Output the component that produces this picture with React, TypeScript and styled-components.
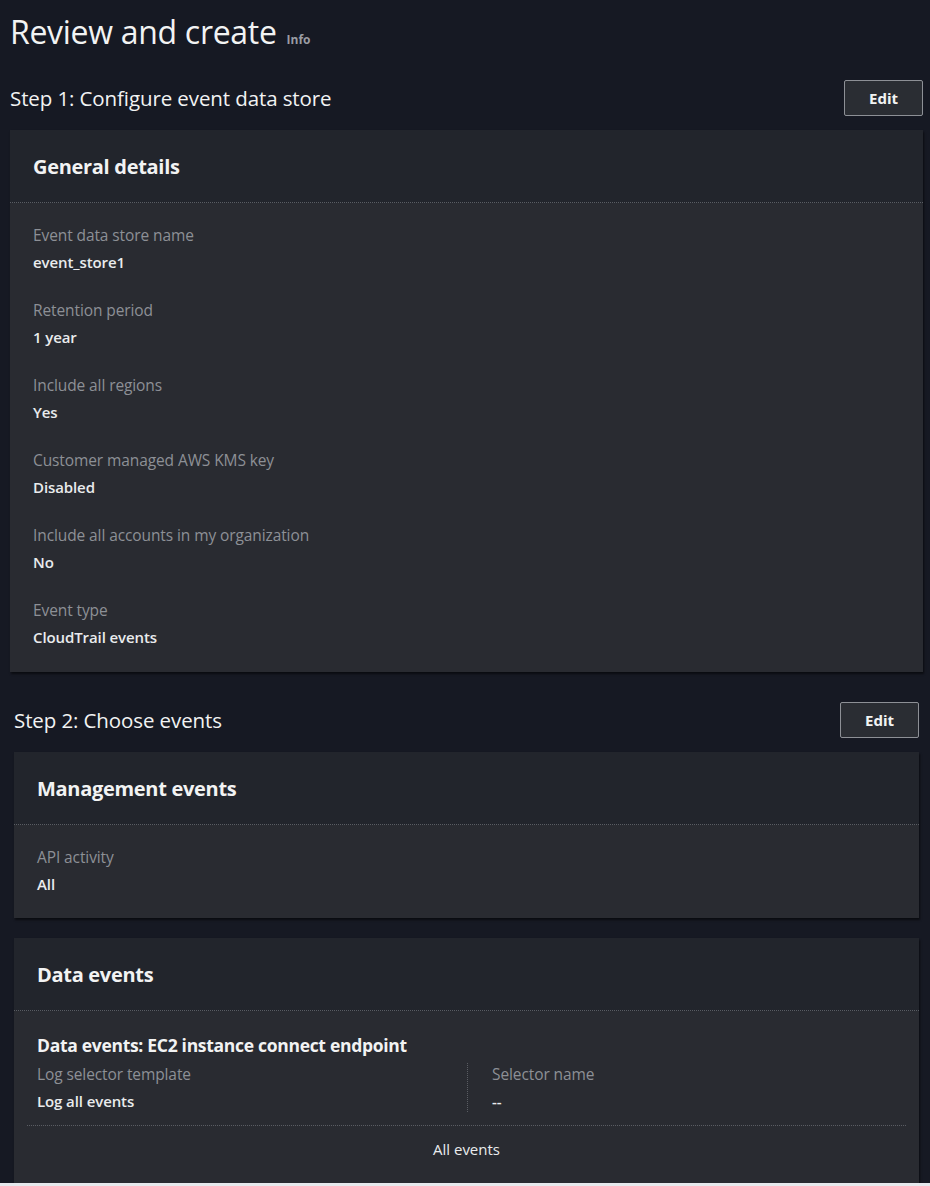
import { createGlobalStyle, styled, css } from "styled-components";

const GlobalStyle = createGlobalStyle`
  html, body {
    margin: 0;
    padding: 0;
    background: #e6e9ed;
  }
  body {
    font-family: "Open Sans", "Noto Sans", Arial, sans-serif;
    -webkit-font-smoothing: antialiased;
  }
`;

type Item = { label: string; value: string };

const generalDetails: Item[] = [
  { label: "Event data store name", value: "event_store1" },
  { label: "Retention period", value: "1 year" },
  { label: "Include all regions", value: "Yes" },
  { label: "Customer managed AWS KMS key", value: "Disabled" },
  { label: "Include all accounts in my organization", value: "No" },
  { label: "Event type", value: "CloudTrail events" },
];

const App = () => {
  return (
    <>
      <GlobalStyle />
      <Page>
        <PageTitle>
          Review and create <InfoLink>Info</InfoLink>
        </PageTitle>

        <Section $left={10} $right={7} $top={26}>
          <StepHeader>
            <StepTitle>Step 1: Configure event data store</StepTitle>
            <EditButton>Edit</EditButton>
          </StepHeader>
          <Card>
            <CardHeader>
              <CardTitle>General details</CardTitle>
            </CardHeader>
            <CardBody>
              {generalDetails.map((item) => (
                <KeyValue key={item.label}>
                  <Label>{item.label}</Label>
                  <Value>{item.value}</Value>
                </KeyValue>
              ))}
            </CardBody>
          </Card>
        </Section>

        <Section $left={14} $right={11} $top={30}>
          <StepHeader>
            <StepTitle>Step 2: Choose events</StepTitle>
            <EditButton>Edit</EditButton>
          </StepHeader>
          <Card>
            <CardHeader>
              <CardTitle>Management events</CardTitle>
            </CardHeader>
            <CardBody $bottom={23}>
              <KeyValue>
                <Label>API activity</Label>
                <Value>All</Value>
              </KeyValue>
            </CardBody>
          </Card>

          <Card $gap={20}>
            <CardHeader>
              <CardTitle>Data events</CardTitle>
            </CardHeader>
            <DataBody>
              <SubTitle>Data events: EC2 instance connect endpoint</SubTitle>
              <Columns>
                <Column>
                  <Label>Log selector template</Label>
                  <Value>Log all events</Value>
                </Column>
                <Column $divided>
                  <Label>Selector name</Label>
                  <Value>--</Value>
                </Column>
              </Columns>
              <TableRow>All events</TableRow>
            </DataBody>
          </Card>
        </Section>
      </Page>
    </>
  );
};

export default App;

const Page = styled.div`
  background: #161923;
  width: 930px;
  height: 1183px;
  overflow: hidden;
  color: #e9ebed;
`;

const PageTitle = styled.h1`
  margin: 0;
  padding: 10px 0 0 10px;
  height: 44px;
  line-height: 44px;
  font-size: 32px;
  font-weight: 400;
  letter-spacing: -0.3px;
  color: #f2f3f3;
`;

const InfoLink = styled.span`
  font-size: 12px;
  font-weight: 700;
  color: #9a9ca3;
  margin-left: 2px;
  letter-spacing: 0;
`;

const Section = styled.section<{ $left: number; $right: number; $top: number }>`
  ${(p) => css`
    margin: ${p.$top}px ${p.$right}px 0 ${p.$left}px;
  `}
`;

const StepHeader = styled.div`
  display: flex;
  align-items: center;
  justify-content: space-between;
  height: 36px;
  margin-bottom: 14px;
`;

const StepTitle = styled.h2`
  margin: 0;
  font-size: 20.5px;
  font-weight: 400;
  letter-spacing: -0.1px;
  color: #f2f3f3;
`;

const EditButton = styled.button`
  width: 79px;
  height: 36px;
  background: #2a2d33;
  border: 1.5px solid #8d9096;
  border-radius: 2px;
  color: #f2f3f3;
  font-family: inherit;
  font-size: 15px;
  font-weight: 700;
  padding: 0;
`;

const Card = styled.div<{ $gap?: number }>`
  background: #292b31;
  box-shadow: 1px 2px 2px rgba(0, 0, 0, 0.55);
  margin-top: ${(p) => p.$gap ?? 0}px;
`;

const CardHeader = styled.div`
  background: #22252c;
  height: 72px;
  display: flex;
  align-items: center;
  padding-left: 23px;
  border-bottom: 1px dotted #5a5d63;
`;

const CardTitle = styled.h3`
  margin: 0;
  font-size: 20px;
  font-weight: 700;
  letter-spacing: -0.3px;
  color: #f2f3f3;
`;

const CardBody = styled.div<{ $bottom?: number }>`
  padding: 21px 23px ${(p) => p.$bottom ?? 24}px;
`;

const KeyValue = styled.div`
  margin-bottom: 26px;
  &:last-child {
    margin-bottom: 0;
  }
`;

const Label = styled.div`
  font-size: 15.5px;
  line-height: 22px;
  color: #8d9096;
  margin-bottom: 5px;
  letter-spacing: -0.1px;
`;

const Value = styled.div`
  font-size: 15px;
  line-height: 22px;
  font-weight: 600;
  color: #e9ebed;
  letter-spacing: -0.1px;
`;

const DataBody = styled.div`
  padding: 22px 13px 0;
`;

const SubTitle = styled.h4`
  margin: 0 0 6px 10px;
  font-size: 17.5px;
  line-height: 24px;
  font-weight: 700;
  letter-spacing: -0.3px;
  color: #f2f3f3;
`;

const Columns = styled.div`
  display: grid;
  grid-template-columns: 440px 1fr;
  padding-bottom: 13px;
  border-bottom: 1px dotted #5a5d63;
`;

const Column = styled.div<{ $divided?: boolean }>`
  padding-left: 10px;
  ${(p) =>
    p.$divided &&
    css`
      padding-left: 24px;
      border-left: 1px dotted #5a5d63;
    `}
`;

const TableRow = styled.div`
  text-align: center;
  font-size: 15px;
  line-height: 22px;
  padding: 12px 0 24px;
  color: #e9ebed;
`;
